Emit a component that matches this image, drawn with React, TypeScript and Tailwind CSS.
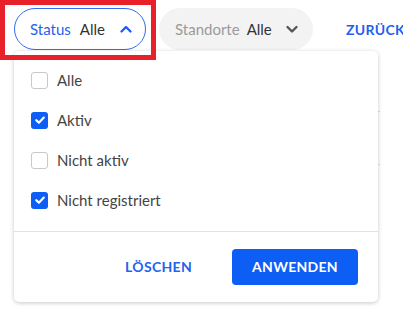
import React from "react";

const Check = () => (
  <svg width="12" height="12" viewBox="0 0 12 12" fill="none">
    <path d="M2.3 6.2 L4.9 8.7 L9.8 3.6" stroke="white" strokeWidth="2.2" strokeLinecap="round" strokeLinejoin="round" />
  </svg>
);

const Chevron = ({ up, color }: { up?: boolean; color: string }) => (
  <svg width="14" height="14" viewBox="0 0 14 14" fill="none">
    <path
      d={up ? "M2.5 9.5 L7 5 L11.5 9.5" : "M2.5 5 L7 9.5 L11.5 5"}
      stroke={color}
      strokeWidth="2.4"
      strokeLinecap="round"
      strokeLinejoin="round"
    />
  </svg>
);

const items = [
  { label: "Alle", checked: false },
  { label: "Aktiv", checked: true },
  { label: "Nicht aktiv", checked: false },
  { label: "Nicht registriert", checked: true },
];

export default function App() {
  return (
    <div className="relative w-[403px] h-[316px] bg-white overflow-hidden font-['Lato',sans-serif]">
      <div className="flex items-center pl-[14px] pt-[8px]">
        <div className="h-[42px] w-[132px] rounded-full border border-[#2f6cf2] flex items-center pl-[15px] shrink-0">
          <span className="text-[15px] text-[#2463eb]">Status</span>
          <span className="text-[15px] text-[#333333] ml-[9px]">Alle</span>
          <span className="ml-[14px] flex"><Chevron up color="#1f5fef" /></span>
        </div>
        <div className="h-[42px] w-[154px] rounded-full bg-[#f3f3f3] flex items-center pl-[16px] ml-[13px] shrink-0">
          <span className="text-[15px] text-[#9a9a9a]">Standorte</span>
          <span className="text-[15px] text-[#333333] ml-[7px]">Alle</span>
          <span className="ml-[13px] flex"><Chevron color="#555555" /></span>
        </div>
        <span className="ml-[33px] text-[14px] font-bold text-[#1f5fef] whitespace-nowrap tracking-[0.3px]">ZURÜCK</span>
      </div>

      <div className="absolute left-[14px] top-[58px] w-[366px] flex flex-col">
        <div className="h-[54px] border-b border-[#dddddd]" />
        <div className="h-[53px] border-b border-[#dddddd]" />
        <div className="h-[60px]" />
      </div>

      <div className="absolute left-[14px] top-[51px] w-[364px] h-[251px] bg-white rounded-[5px] shadow-[0_1px_4px_rgba(0,0,0,0.22)] flex flex-col">
        <div className="pt-[9px] pb-[11px] flex flex-col">
          {items.map((it) => (
            <div key={it.label} className="h-[40px] flex items-center pl-[17px]">
              {it.checked ? (
                <div className="w-[17px] h-[17px] rounded-[3px] bg-[#0d5ef5] flex items-center justify-center">
                  <Check />
                </div>
              ) : (
                <div className="w-[17px] h-[17px] rounded-[3px] border-[1.5px] border-[#c8c8c8] bg-white" />
              )}
              <span className="ml-[9px] text-[15px] text-[#444444]">{it.label}</span>
            </div>
          ))}
        </div>
        <div className="border-t border-[#e2e2e2] h-[70px] flex items-center justify-end pr-[20px]">
          <span className="text-[14px] font-bold text-[#2463eb] tracking-[0.3px]">LÖSCHEN</span>
          <div className="ml-[40px] w-[126px] h-[36px] rounded-[4px] bg-[#0d5ef5] flex items-center justify-center">
            <span className="text-[14px] font-bold text-white tracking-[0.3px]">ANWENDEN</span>
          </div>
        </div>
      </div>

      <div className="absolute left-0 top-0 w-[156px] h-[60px] border-[5px] border-[#e8202a]" />
    </div>
  );
}
